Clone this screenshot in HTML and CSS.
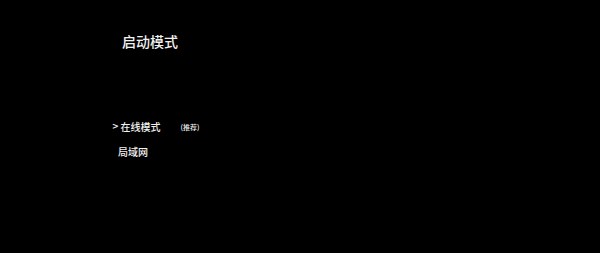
FILE: index.html
```html
<!DOCTYPE html>
<html lang="zh-CN">
<head>
<meta charset="utf-8">
<link rel="stylesheet" href="styles.css">
</head>
<body>
<main class="screen">
  <h1 class="title">启动模式</h1>
  <ul class="menu">
    <li class="item selected"><span class="marker">&gt;</span><span class="label">在线模式</span><span class="note">(推荐)</span></li>
    <li class="item"><span class="label">局域网</span></li>
  </ul>
</main>
</body>
</html>
```
FILE: styles.css
```css
html, body {
  margin: 0;
  padding: 0;
  background: #000;
}
.screen {
  width: 600px;
  height: 253px;
  background: #000;
  color: #f2f2f2;
  font-family: "Noto Sans CJK SC", "Noto Sans", sans-serif;
  padding: 31px 0 0 122px;
  box-sizing: border-box;
}
.title {
  margin: 0;
  font-size: 14px;
  line-height: 20px;
  font-weight: 500;
}
.menu {
  list-style: none;
  margin: 63px 0 0 -10px;
  padding: 0;
}
.item {
  display: flex;
  align-items: center;
  height: 25px;
  padding-left: 6px;
  font-size: 10px;
  font-weight: 500;
}
.item.selected {
  padding-left: 0;
}
.marker {
  width: 8.5px;
  font-size: 8px;
  font-family: "DejaVu Sans", sans-serif;
  font-weight: bold;
}
.note {
  margin-left: 20px;
  font-size: 7px;
}
```
